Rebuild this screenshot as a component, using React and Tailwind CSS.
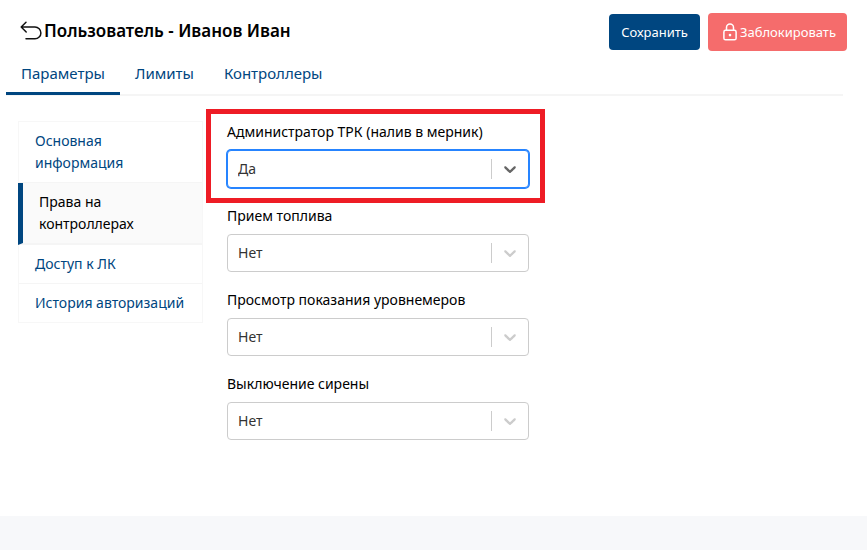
const tabs = ["Параметры", "Лимиты", "Контроллеры"];

const sections = [
  "Основная информация",
  "Права на контроллерах",
  "Доступ к ЛК",
  "История авторизаций",
];

const rights = [
  { id: "admin", label: "Администратор ТРК (налив в мерник)", value: "Да", highlighted: true },
  { id: "fuel", label: "Прием топлива", value: "Нет" },
  { id: "levels", label: "Просмотр показания уровнемеров", value: "Нет" },
  { id: "siren", label: "Выключение сирены", value: "Нет" },
];

function BackIcon() {
  return (
    <svg width="22" height="20" viewBox="0 0 22 20" fill="none" stroke="#111" strokeWidth="1.5" strokeLinecap="round" strokeLinejoin="round">
      <path d="M6 1.2 1.2 6l5 5M1.5 6H15a5.9 5.9 0 0 1 0 11.8H6" />
    </svg>
  );
}

function LockIcon() {
  return (
    <svg width="14" height="18" viewBox="0 0 14 18" fill="none" stroke="white" strokeWidth="1.5">
      <rect x="0.9" y="7.3" width="12.2" height="9.5" rx="1.6" />
      <path d="M3.5 7.3V4.6a3.5 3.5 0 0 1 7 0v2.7" />
      <circle cx="7" cy="12.1" r="1.3" fill="white" stroke="none" />
    </svg>
  );
}

function Field({ id, label, value, highlighted }) {
  return (
    <div className="relative">
      {highlighted && (
        <div className="pointer-events-none absolute -top-3 -right-4 -bottom-[15px] -left-[21px] border-5 border-[#ee1c25]" />
      )}
      <label htmlFor={id} className="mb-[7px] block leading-[22px]">
        {label}
      </label>
      <div className="relative">
        <select
          id={id}
          defaultValue={value}
          className={
            highlighted
              ? "block h-[38px] w-full appearance-none rounded border border-[#2684ff] bg-white px-2.5 text-[#333] ring-1 ring-[#2684ff] outline-none"
              : "block h-[38px] w-full appearance-none rounded border border-[#ccc] bg-white px-2.5 text-[#333] outline-none"
          }
        >
          <option>Да</option>
          <option>Нет</option>
        </select>
        <div
          className={
            highlighted
              ? "pointer-events-none absolute inset-y-[9px] right-px flex w-[37px] items-center justify-center border-l border-[#ccc] text-[#666]"
              : "pointer-events-none absolute inset-y-[9px] right-px flex w-[37px] items-center justify-center border-l border-[#ccc] text-[#ccc]"
          }
        >
          <svg width="20" height="20" viewBox="0 0 20 20" fill="currentColor">
            <path d="M4.516 7.548c0.436-0.446 1.043-0.481 1.576 0l3.908 3.747 3.908-3.747c0.533-0.481 1.141-0.446 1.574 0 0.436 0.445 0.408 1.197 0 1.615-0.406 0.418-4.695 4.502-4.695 4.502-0.217 0.223-0.502 0.335-0.787 0.335s-0.57-0.112-0.789-0.335c0 0-4.287-4.084-4.695-4.502s-0.436-1.17 0-1.615z" />
          </svg>
        </div>
      </div>
    </div>
  );
}

export default function App() {
  return (
    <div className="flex min-h-screen flex-col bg-white font-['Noto_Sans',sans-serif] text-sm text-black">
      <header className="flex items-center justify-between px-5 pt-[13px]">
        <div className="flex items-center pb-0.5">
          <button type="button" aria-label="Назад" className="mr-0.5">
            <BackIcon />
          </button>
          <h1 className="text-[17px] leading-6 font-semibold">Пользователь - Иванов Иван</h1>
        </div>
        <div className="flex items-center gap-2 text-white">
          <button type="button" className="h-9 w-[91px] rounded bg-[#004680] text-[13px]">
            Сохранить
          </button>
          <button type="button" className="flex h-[38px] w-[139px] items-center justify-center gap-[3px] rounded bg-[#f56c6c] pl-1 text-[13px]">
            <LockIcon />
            Заблокировать
          </button>
        </div>
      </header>

      <nav className="mt-[3px] mr-6 ml-1.5 flex border-b-2 border-[#f5f5f5] text-[15px] text-[#004680]">
        {tabs.map((tab, i) => (
          <a
            key={tab}
            href="#"
            className={
              i === 0
                ? "-mb-px border-b-3 border-[#004680] px-[15px] py-2 leading-[22px]"
                : "px-[15px] py-2 leading-[22px]"
            }
          >
            {tab}
          </a>
        ))}
      </nav>

      <main className="flex flex-1 gap-6 px-[18px] pt-[25px] pb-[76px]">
        <nav className="w-[185px] shrink-0 self-start border border-[#f7f7f7] leading-[22px]">
          {sections.map((section, i) => (
            <a
              key={section}
              href="#"
              className={
                i === 1
                  ? "-ml-px block border-b-2 border-l-5 border-b-[#f5f5f5] border-l-[#004680] bg-[#fafafa] py-2 pr-8 pl-4 text-black"
                  : "block border-b border-[#f5f5f5] px-4 py-2 text-[#004680] last:border-b-0"
              }
            >
              {section}
            </a>
          ))}
        </nav>
        <form className="flex w-[302px] flex-col gap-[17px]">
          {rights.map((right) => (
            <Field key={right.id} {...right} />
          ))}
        </form>
      </main>

      <footer className="h-[34px] bg-[#f7f8fa]" />
    </div>
  );
}
